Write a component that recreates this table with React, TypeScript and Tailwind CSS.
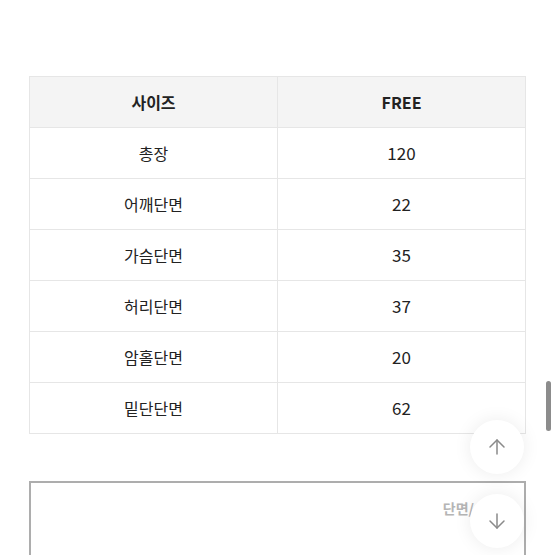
import { ArrowUp, ArrowDown } from 'lucide-react'

const rows = [
  ['총장', '120'],
  ['어깨단면', '22'],
  ['가슴단면', '35'],
  ['허리단면', '37'],
  ['암홀단면', '20'],
  ['밑단단면', '62'],
]

export default function App() {
  return (
    <div
      className="relative h-[555px] w-[555px] overflow-hidden bg-white text-[#222]"
      style={{ fontFamily: '"Noto Sans CJK KR", "Noto Sans", sans-serif' }}
    >
      <div className="pl-[29px] pt-[76px]">
        <div className="w-[497px] border-l border-t border-[#e6e6e6]">
          <div className="grid h-[51px] grid-cols-[248px_248px] bg-[#f4f4f4]">
            <div className="flex items-center justify-center border-b border-r border-[#e6e6e6] text-[16px] font-bold">사이즈</div>
            <div className="flex items-center justify-center border-b border-r border-[#e6e6e6] text-[16px] font-bold">FREE</div>
          </div>
          {rows.map(([k, v]) => (
            <div key={k} className="grid h-[51px] grid-cols-[248px_248px]">
              <div className="flex items-center justify-center border-b border-r border-[#e6e6e6] text-[16px]">{k}</div>
              <div className="flex items-center justify-center border-b border-r border-[#e6e6e6] text-[17px]">{v}</div>
            </div>
          ))}
        </div>

        <div className="mt-[47px] h-[120px] w-[497px] border-2 border-[#adadad]">
          <div className="flex justify-end pr-[50px] pt-[15px] text-[14px] font-bold text-[#b5b5b5]">단면/</div>
        </div>
      </div>

      <button className="absolute left-[470px] top-[420px] flex h-[54px] w-[54px] items-center justify-center rounded-full bg-white shadow-[0_0_18px_rgba(0,0,0,0.08)]">
        <ArrowUp className="h-6 w-6 text-[#8a8a8a]" strokeWidth={1.5} />
      </button>
      <button className="absolute left-[470px] top-[494px] flex h-[54px] w-[54px] items-center justify-center rounded-full bg-white shadow-[0_0_18px_rgba(0,0,0,0.08)]">
        <ArrowDown className="h-6 w-6 text-[#8a8a8a]" strokeWidth={1.5} />
      </button>

      <div className="absolute left-[546px] top-[381px] h-[50px] w-[5px] rounded-full bg-[#8c8c8c]" />
    </div>
  )
}
